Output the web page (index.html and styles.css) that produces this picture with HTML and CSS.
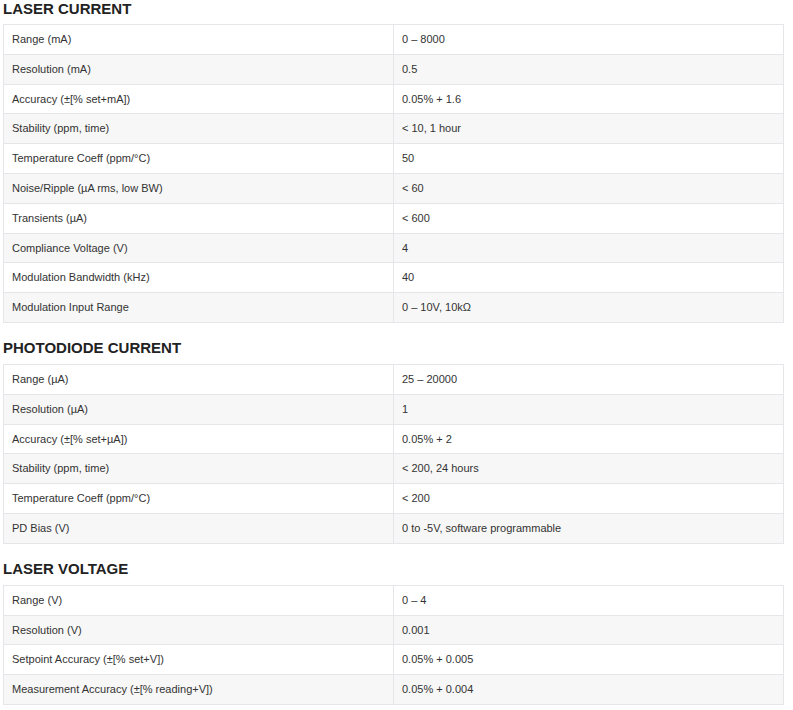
FILE: index.html
```html
<!DOCTYPE html>
<html>
<head>
<meta charset="utf-8">
<link rel="stylesheet" href="styles.css">
</head>
<body>
<div class="page">
  <h3 class="title">LASER CURRENT</h3>
  <table class="spec">
    <tr><td>Range (mA)</td><td>0 – 8000</td></tr>
    <tr><td>Resolution (mA)</td><td>0.5</td></tr>
    <tr><td>Accuracy (±[% set+mA])</td><td>0.05% + 1.6</td></tr>
    <tr><td>Stability (ppm, time)</td><td>&lt; 10, 1 hour</td></tr>
    <tr><td>Temperature Coeff (ppm/°C)</td><td>50</td></tr>
    <tr><td>Noise/Ripple (µA rms, low BW)</td><td>&lt; 60</td></tr>
    <tr><td>Transients (µA)</td><td>&lt; 600</td></tr>
    <tr><td>Compliance Voltage (V)</td><td>4</td></tr>
    <tr><td>Modulation Bandwidth (kHz)</td><td>40</td></tr>
    <tr><td>Modulation Input Range</td><td>0 – 10V, 10kΩ</td></tr>
  </table>

  <h3 class="title">PHOTODIODE CURRENT</h3>
  <table class="spec">
    <tr><td>Range (µA)</td><td>25 – 20000</td></tr>
    <tr><td>Resolution (µA)</td><td>1</td></tr>
    <tr><td>Accuracy (±[% set+µA])</td><td>0.05% + 2</td></tr>
    <tr><td>Stability (ppm, time)</td><td>&lt; 200, 24 hours</td></tr>
    <tr><td>Temperature Coeff (ppm/°C)</td><td>&lt; 200</td></tr>
    <tr><td>PD Bias (V)</td><td>0 to -5V, software programmable</td></tr>
  </table>

  <h3 class="title">LASER VOLTAGE</h3>
  <table class="spec">
    <tr><td>Range (V)</td><td>0 – 4</td></tr>
    <tr><td>Resolution (V)</td><td>0.001</td></tr>
    <tr><td>Setpoint Accuracy (±[% set+V])</td><td>0.05% + 0.005</td></tr>
    <tr><td>Measurement Accuracy (±[% reading+V])</td><td>0.05% + 0.004</td></tr>
  </table>
</div>
</body>
</html>
```

FILE: styles.css
```css
html, body {
  margin: 0;
  padding: 0;
  background: #ffffff;
}

body {
  font-family: "Liberation Sans", Arial, sans-serif;
  color: #333333;
}

.page {
  width: 781px;
  padding-left: 3px;
}

.title {
  margin: 16px 0 8px 0;
  font-size: 15px;
  line-height: 17px;
  font-weight: bold;
  color: #222222;
}

.page > .title:first-child {
  margin-top: 0;
  margin-bottom: 7px;
}

.spec {
  width: 781px;
  border-collapse: collapse;
  table-layout: fixed;
}

.spec td {
  width: 50%;
  border: 1px solid #e4e6ea;
  padding: 8px 8px;
  font-size: 11px;
  line-height: 12.8px;
  color: #333333;
  vertical-align: middle;
}

.spec tr:nth-child(even) td {
  background: #f7f7f7;
}
```
